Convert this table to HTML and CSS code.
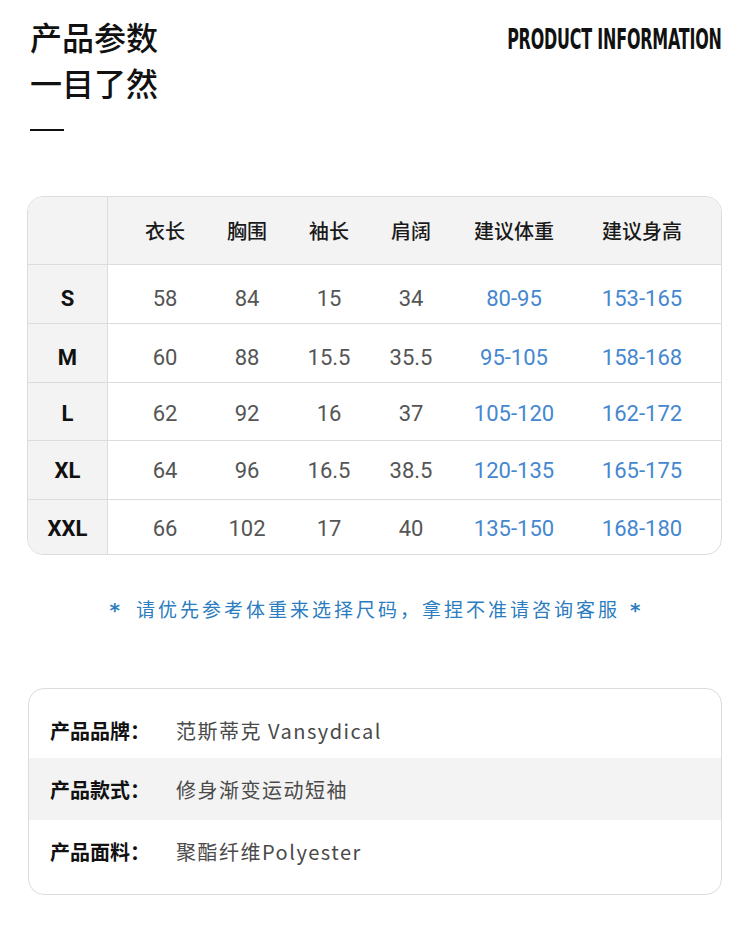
FILE: index.html
```html
<!DOCTYPE html>
<html lang="zh-CN">
<head>
<meta charset="utf-8">
<title>产品参数</title>
<link rel="stylesheet" href="styles.css">
</head>
<body>
<div class="page">
  <header class="head">
    <div class="head-left">
      <h1 class="title">产品参数<br>一目了然</h1>
      <div class="dash"></div>
    </div>
    <div class="en-title"><span>PRODUCT INFORMATION</span></div>
  </header>

  <section class="size-table">
    <div class="row head-row">
      <div class="lab"></div>
      <div class="cells">
        <div>衣长</div><div>胸围</div><div>袖长</div><div>肩阔</div><div>建议体重</div><div>建议身高</div>
      </div>
    </div>
    <div class="row r1">
      <div class="lab">S</div>
      <div class="cells">
        <div>58</div><div>84</div><div>15</div><div>34</div><div class="blue">80-95</div><div class="blue">153-165</div>
      </div>
    </div>
    <div class="row r2">
      <div class="lab">M</div>
      <div class="cells">
        <div>60</div><div>88</div><div>15.5</div><div>35.5</div><div class="blue">95-105</div><div class="blue">158-168</div>
      </div>
    </div>
    <div class="row r3">
      <div class="lab">L</div>
      <div class="cells">
        <div>62</div><div>92</div><div>16</div><div>37</div><div class="blue">105-120</div><div class="blue">162-172</div>
      </div>
    </div>
    <div class="row r4">
      <div class="lab">XL</div>
      <div class="cells">
        <div>64</div><div>96</div><div>16.5</div><div>38.5</div><div class="blue">120-135</div><div class="blue">165-175</div>
      </div>
    </div>
    <div class="row last">
      <div class="lab">XXL</div>
      <div class="cells">
        <div>66</div><div>102</div><div>17</div><div>40</div><div class="blue">135-150</div><div class="blue">168-180</div>
      </div>
    </div>
  </section>

  <p class="note"><span class="star">*</span>请优先参考体重来选择尺码，拿捏不准请咨询客服<span class="star right">*</span></p>

  <section class="info">
    <div class="info-row first"><span class="info-lab">产品品牌：</span><span class="info-val">范斯蒂克 Vansydical</span></div>
    <div class="info-row gray"><span class="info-lab">产品款式：</span><span class="info-val">修身渐变运动短袖</span></div>
    <div class="info-row"><span class="info-lab">产品面料：</span><span class="info-val">聚酯纤维Polyester</span></div>
  </section>
</div>
</body>
</html>
```

FILE: styles.css
```css
html, body {
  margin: 0;
  padding: 0;
  background: #ffffff;
}

body {
  font-family: "Noto Sans CJK SC", "Noto Sans", sans-serif;
  color: #111;
}

.page {
  width: 750px;
}

.head {
  display: flex;
  justify-content: space-between;
  align-items: flex-start;
  padding: 0 28px 0 30px;
}

.title {
  margin: 13px 0 0;
  font-size: 32px;
  line-height: 46px;
  font-weight: 500;
  letter-spacing: 0;
  color: #111;
}

.dash {
  width: 34px;
  height: 2px;
  background: #111;
  margin-top: 24px;
}

.en-title {
  margin-top: 22px;
  width: 216px;
  display: flex;
  justify-content: flex-end;
}

.en-title span {
  display: inline-block;
  font-family: "DejaVu Sans Condensed", "DejaVu Sans", sans-serif;
  font-stretch: condensed;
  font-weight: 700;
  font-size: 29px;
  line-height: 34px;
  color: #111;
  white-space: nowrap;
  transform: scaleX(0.61);
  transform-origin: right center;
  letter-spacing: -0.3px;
}

/* size table */
.size-table {
  margin: 65px 0 0 27px;
  width: 695px;
  box-sizing: border-box;
  border: 1px solid #dcdcdc;
  border-radius: 16px;
  overflow: hidden;
}

.row {
  display: flex;
  height: 58px;
  box-sizing: content-box;
  border-bottom: 1px solid #dcdcdc;
}

.row.r1 .cells, .row.r1 .lab { padding-top: 9px; }
.row.r2 .cells, .row.r2 .lab { padding-top: 9px; }
.row.r3 { height: 57px; }
.row.r3 .cells, .row.r3 .lab { padding-top: 3px; }
.row.r4 .cells, .row.r4 .lab { padding-top: 1px; }

.row.last {
  border-bottom: none;
  height: 54px;
}

.row.last .cells, .row.last .lab { padding-top: 3px; }

.head-row {
  height: 67px;
  background: #f3f3f3;
}

.lab {
  width: 79px;
  flex: none;
  box-sizing: content-box;
  border-right: 1px solid #dcdcdc;
  background: #f3f3f3;
  display: flex;
  align-items: center;
  justify-content: center;
  font-family: "Roboto", "Liberation Sans", sans-serif;
  font-weight: 700;
  font-size: 22px;
  color: #111;
}

.row .lab { box-sizing: border-box; width: 80px; }

.cells {
  display: grid;
  grid-template-columns: 82px 82px 82px 82px 124px 132px;
  padding-left: 16px;
  align-items: center;
  box-sizing: border-box;
}

.cells > div {
  text-align: center;
  font-family: "Roboto", "Liberation Sans", sans-serif;
  font-size: 22px;
  color: #555;
}

.head-row .cells > div {
  font-family: "Noto Sans CJK SC", sans-serif;
  font-size: 20px;
  font-weight: 500;
  color: #1a1a1a;
}

.cells > .blue {
  color: #4587d0;
  font-weight: 400;
}

/* note */
.note {
  margin: 39px 0 0;
  text-align: center;
  font-size: 19px;
  line-height: 30px;
  color: #2b7cc0;
  letter-spacing: 3px;
}

.star {
  font-family: "DejaVu Sans", sans-serif;
  font-weight: 700;
  font-size: 20px;
  margin-right: 16px;
  letter-spacing: 0;
}

.star.right {
  margin-left: 10px;
  margin-right: 0;
}

/* info box */
.info {
  margin: 63px 0 0 28px;
  width: 694px;
  box-sizing: border-box;
  border: 1px solid #dcdcdc;
  border-radius: 16px;
  padding: 0 0 12px;
  overflow: hidden;
}

.info-row {
  display: flex;
  align-items: center;
  height: 62px;
  padding-left: 21px;
  font-size: 20px;
}

.info-row.first {
  height: 56px;
  padding-top: 13px;
}

.info-row.gray {
  background: #f3f3f3;
}

.info-lab {
  width: 126px;
  flex: none;
  font-weight: 700;
  color: #111;
}

.info-val {
  color: #4a4a4a;
  letter-spacing: 1.5px;
}
```
